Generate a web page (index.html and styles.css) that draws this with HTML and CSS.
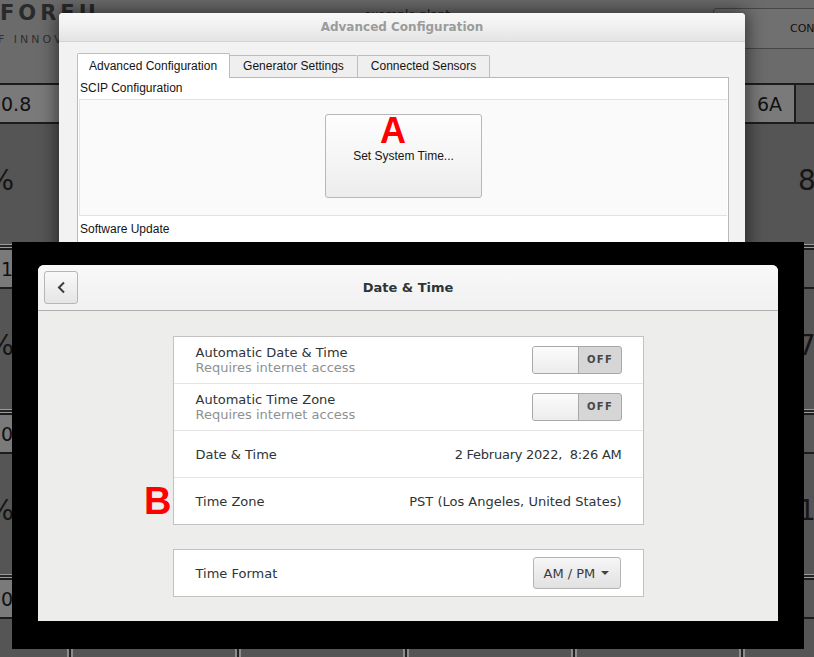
FILE: index.html
```html
<!DOCTYPE html>
<html>
<head>
<meta charset="utf-8">
<title>Date &amp; Time</title>
<link rel="stylesheet" href="styles.css">
</head>
<body>
<div class="app">
  <header class="app-head">
    <div class="logo">
      <div class="logo-mark">FOREU</div>
      <div class="logo-sub">F INNOVATION</div>
    </div>
    <div class="plant">example plant</div>
    <div class="con">CONFIG</div>
  </header>
  <div class="grid">
    <div class="col c0">
      <div class="s">0.8</div>
      <div class="b">12%</div>
      <div class="gsep"></div>
      <div class="s">1.0</div>
      <div class="b">34%</div>
      <div class="gsep"></div>
      <div class="s">0.9</div>
      <div class="b">56%</div>
      <div class="gsep"></div>
      <div class="s">0.7</div>
      <div class="b">78%</div>
    </div>
    <div class="vsep"></div>
    <div class="col cm">
      <div class="s"></div><div class="b"></div><div class="gsep"></div>
      <div class="s"></div><div class="b"></div><div class="gsep"></div>
      <div class="s"></div><div class="b"></div><div class="gsep"></div>
      <div class="s"></div><div class="b"></div>
    </div>
    <div class="vsep"></div>
    <div class="col cm">
      <div class="s"></div><div class="b"></div><div class="gsep"></div>
      <div class="s"></div><div class="b"></div><div class="gsep"></div>
      <div class="s"></div><div class="b"></div><div class="gsep"></div>
      <div class="s"></div><div class="b"></div>
    </div>
    <div class="vsep"></div>
    <div class="col cm">
      <div class="s"></div><div class="b"></div><div class="gsep"></div>
      <div class="s"></div><div class="b"></div><div class="gsep"></div>
      <div class="s"></div><div class="b"></div><div class="gsep"></div>
      <div class="s"></div><div class="b"></div>
    </div>
    <div class="vsep"></div>
    <div class="col cm">
      <div class="s"></div><div class="b"></div><div class="gsep"></div>
      <div class="s"></div><div class="b"></div><div class="gsep"></div>
      <div class="s"></div><div class="b"></div><div class="gsep"></div>
      <div class="s"></div><div class="b"></div>
    </div>
    <div class="vsep"></div>
    <div class="col c5">
      <div class="s"><span class="lab">6A</span><span class="val"></span></div>
      <div class="b">8</div>
      <div class="gsep"></div>
      <div class="s"><span class="lab">6B</span><span class="val"></span></div>
      <div class="b">7</div>
      <div class="gsep"></div>
      <div class="s"><span class="lab">6C</span><span class="val"></span></div>
      <div class="b">10</div>
      <div class="gsep"></div>
      <div class="s"><span class="lab">6D</span><span class="val"></span></div>
      <div class="b">9</div>
    </div>
  </div>
</div>

<div class="adv">
  <div class="adv-title">Advanced Configuration</div>
  <div class="adv-body">
    <div class="tabs">
      <div class="tab active">Advanced Configuration</div>
      <div class="tab">Generator Settings</div>
      <div class="tab">Connected Sensors</div>
    </div>
    <div class="panel">
      <div class="sec-label">SCIP Configuration</div>
      <div class="sec-box">
        <div class="btn-wrap">
          <button class="sys-btn">Set System Time...</button>
          <span class="mark mark-a">A</span>
        </div>
      </div>
      <div class="sec-label tall">Software Update</div>
      <div class="sec-box"></div>
    </div>
  </div>
</div>

<div class="overlay">
  <div class="dt">
    <div class="dt-head">
      <button class="back" aria-label="Back">
        <svg width="34" height="33" viewBox="0 0 34 33"><polyline points="20,11.5 15,16.5 20,21.5" fill="none" stroke="#3c3c3c" stroke-width="2"/></svg>
      </button>
      <div class="dt-title">Date &amp; Time</div>
      <div></div>
    </div>
    <div class="dt-body">
      <div class="list">
        <div class="row">
          <div class="txt"><div class="t">Automatic Date &amp; Time</div><div class="sub">Requires internet access</div></div>
          <div class="switch"><span class="knob"></span><span class="off">OFF</span></div>
        </div>
        <div class="row">
          <div class="txt"><div class="t">Automatic Time Zone</div><div class="sub">Requires internet access</div></div>
          <div class="switch"><span class="knob"></span><span class="off">OFF</span></div>
        </div>
        <div class="row">
          <div class="t">Date &amp; Time</div>
          <div class="t val date">2 February 2022,  8:26 AM</div>
        </div>
        <div class="row">
          <div class="t">Time Zone</div>
          <div class="t val">PST (Los Angeles, United States)</div>
        </div>
      </div>
      <div class="list">
        <div class="row">
          <div class="t">Time Format</div>
          <div class="dd"><span>AM / PM</span><span class="caret"></span></div>
        </div>
      </div>
      <span class="mark mark-b">B</span>
    </div>
  </div>
</div>
</body>
</html>
```

FILE: styles.css
```css
* { box-sizing: border-box; }
html, body { margin: 0; padding: 0; }
body {
  width: 814px;
  height: 657px;
  overflow: hidden;
  position: relative;
  background: #555;
  font-family: "DejaVu Sans", sans-serif;
}

/* ---------- background application ---------- */
.app { width: 814px; height: 657px; display: flex; flex-direction: column; overflow: hidden; }
.app-head {
  height: 83px;
  flex: none;
  background: #6b6b6b;
  display: grid;
  grid-template-columns: 1fr auto 1fr;
  align-items: start;
}
.logo { padding-top: 3px; color: #2a2a2a; overflow: hidden; }
.logo-mark {
  font: bold 21px/21px "DejaVu Sans", sans-serif;
  letter-spacing: 4px;
  white-space: nowrap;
}
.logo-sub {
  margin-top: 9px;
  margin-left: -2px;
  font: 11px/13px "DejaVu Sans", sans-serif;
  letter-spacing: 3px;
  color: #303030;
  white-space: nowrap;
}
.plant {
  padding-top: 8px;
  font: 12px/14px "DejaVu Sans", sans-serif;
  color: #1e1e1e;
}
.con {
  justify-self: end;
  margin-top: 8px;
  width: 101px;
  height: 41px;
  border: 1px solid #474747;
  border-right: none;
  border-radius: 4px 0 0 4px;
  background: #707070;
  padding-left: 76px;
  font: 11px/39px "DejaVu Sans", sans-serif;
  color: #111;
  white-space: nowrap;
  overflow: hidden;
}

.grid { flex: 1; display: flex; min-height: 0; overflow: hidden; }
.col { display: flex; flex-direction: column; flex-shrink: 0; }
.c0 { width: 67px; }
.cm { width: 162px; }
.c5 { flex: 1 1 0; min-width: 0; overflow: hidden; }
.vsep {
  width: 6px;
  flex-shrink: 0;
  background: linear-gradient(to right, #8c8c8c 0 2px, #222 2px 4px, #8c8c8c 4px 6px);
}
.s {
  height: 41px;
  flex: none;
  background: #7a7a7a;
  border-top: 2px solid #1c1c1c;
  border-bottom: 2px solid #1c1c1c;
  display: flex;
  align-items: center;
  padding-left: 1px;
  font-size: 19px;
  color: #111;
}
.b {
  height: 120px;
  flex: none;
  background: #555;
  display: flex;
  align-items: center;
  padding-bottom: 7px;
  font-size: 28px;
  color: #151515;
  white-space: nowrap;
}
.gsep {
  height: 4px;
  flex: none;
  background: linear-gradient(#9a9a9a 0 1px, #262626 1px 3px, #9a9a9a 3px 4px);
}
.c0 .b { justify-content: flex-end; padding-right: 53px; }
.c5 .s { padding-left: 0; align-items: stretch; }
.c5 .s .lab { width: 49px; flex: none; display: flex; align-items: center; justify-content: center; background: #7a7a7a; }
.c5 .s .val { flex: 1; background: #585858; border-left: 2px solid #1c1c1c; }
.c5 .b { padding-left: 53px; }

/* ---------- Advanced Configuration dialog ---------- */
.adv {
  position: absolute;
  left: 59px;
  top: 13px;
  width: 686px;
  height: 300px;
  background: #f2f2f2;
  border-radius: 4px 4px 0 0;
  box-shadow: 0 0 18px 2px rgba(0, 0, 0, 0.55);
}
.adv-title {
  height: 29px;
  padding-top: 1px;
  border-bottom: 1px solid #d4d4d4;
  border-radius: 4px 4px 0 0;
  background: linear-gradient(#f8f8f8, #efefef 55%, #e3e3e3);
  text-align: center;
  font: bold 12px/27px "DejaVu Sans", sans-serif;
  color: #9b9b9b;
}
.adv-body { padding: 11px 16px 0 18px; }
.tabs { display: flex; align-items: flex-end; height: 24px; }
.tab {
  height: 22px;
  padding: 0 13px;
  border: 1px solid #bdbdbd;
  border-left: none;
  border-bottom: none;
  border-radius: 0 2px 0 0;
  background: #efefef;
  font: 12px/21px "Liberation Sans", Arial, sans-serif;
  color: #141414;
  white-space: nowrap;
}
.tab.active {
  position: relative;
  z-index: 1;
  height: 25px;
  margin-bottom: -1px;
  padding: 0 12px 0 11px;
  border-left: 1px solid #bdbdbd;
  border-radius: 2px 2px 0 0;
  background: #fff;
  line-height: 25px;
}
.panel {
  height: 260px;
  background: #fff;
  border: 1px solid #b9b9b9;
  padding: 0 1px;
}
.sec-label {
  height: 21px;
  padding-left: 1px;
  font: 12px/21px "Liberation Sans", Arial, sans-serif;
  color: #141414;
}
.sec-label.tall { height: 26px; line-height: 26px; }
.sec-box {
  height: 117px;
  padding-bottom: 3px;
  background: #fafafa;
  border-top: 1px solid #e2e2e2;
  border-bottom: 1px solid #e2e2e2;
  border-left: 1px solid #e6e6e6;
  display: flex;
  align-items: center;
  justify-content: center;
}
.btn-wrap { position: relative; }
.sys-btn {
  display: block;
  width: 157px;
  height: 84px;
  margin: 0;
  border: 1px solid #b8b8b8;
  border-radius: 3px;
  background: linear-gradient(#fdfdfd, #f6f6f6 50%, #ececec);
  font: 12px "Liberation Sans", Arial, sans-serif;
  color: #151515;
  padding: 0;
}
.mark {
  position: absolute;
  font-family: "Liberation Sans", Arial, sans-serif;
  font-weight: bold;
  color: #ff0000;
}
.mark-a { left: 55px; top: -1px; font-size: 36px; line-height: 36px; }

/* ---------- Date & Time overlay ---------- */
.overlay {
  position: absolute;
  left: 12px;
  top: 242px;
  width: 792px;
  height: 407px;
  background: #000;
  padding: 23px 26px;
}
.dt {
  width: 740px;
  height: 356px;
  background: #ededeb;
  border-radius: 6px 6px 0 0;
  overflow: hidden;
  display: flex;
  flex-direction: column;
}
.dt-head {
  height: 46px;
  flex: none;
  background: linear-gradient(#f8f8f8, #f1f1f1);
  border-bottom: 1px solid #b0b0b0;
  display: grid;
  grid-template-columns: 1fr auto 1fr;
  align-items: center;
  padding: 0 6px;
}
.back {
  width: 34px;
  height: 33px;
  margin: 0;
  padding: 0;
  border: 1px solid #b6b6b6;
  border-radius: 3px;
  background: linear-gradient(#f9f9f9, #e5e5e5);
  display: flex;
  align-items: center;
  justify-content: center;
}
.back svg { display: block; margin: -1px; }
.dt-title {
  font: bold 13px "DejaVu Sans", sans-serif;
  color: #2e3436;
}
.dt-body {
  flex: 1;
  position: relative;
  padding-top: 25px;
  display: flex;
  flex-direction: column;
  align-items: center;
  gap: 24px;
}
.list {
  width: 471px;
  background: #fff;
  border: 1px solid #c2c2c2;
}
.row {
  height: 47px;
  border-top: 1px solid #e4e4e4;
  display: flex;
  align-items: center;
  justify-content: space-between;
  padding: 0 21px 0 22px;
}
.row:first-child { height: 46px; border-top: none; }
.t {
  font-size: 13px;
  line-height: 15px;
  color: #2e3436;
}
.val { white-space: pre; }
.date { letter-spacing: -0.25px; }
.sub {
  font-size: 13px;
  line-height: 15px;
  color: #8e9192;
}
.switch {
  width: 90px;
  height: 28px;
  border: 1px solid #a8a8a8;
  border-radius: 3px;
  background: #d6d6d6;
  display: flex;
  overflow: hidden;
}
.knob {
  width: 46px;
  border-right: 1px solid #a8a8a8;
  background: linear-gradient(#fcfcfc, #ececec);
}
.off {
  flex: 1;
  text-align: center;
  padding-left: 1px;
  font: bold 10px/26px "DejaVu Sans", sans-serif;
  letter-spacing: 1.3px;
  color: #474747;
}
.dd {
  width: 88px;
  height: 32px;
  margin-right: 1px;
  border: 1px solid #b4b4b4;
  border-radius: 3px;
  background: linear-gradient(#f6f6f6, #e1e1e1);
  display: flex;
  align-items: center;
  gap: 6px;
  padding-left: 10px;
  font-size: 13px;
  color: #3a3a3a;
}
.caret {
  width: 0;
  height: 0;
  border-left: 4px solid transparent;
  border-right: 4px solid transparent;
  border-top: 4px solid #444;
}
.mark-b { left: 106px; top: 171px; font-size: 38px; line-height: 38px; }
```
